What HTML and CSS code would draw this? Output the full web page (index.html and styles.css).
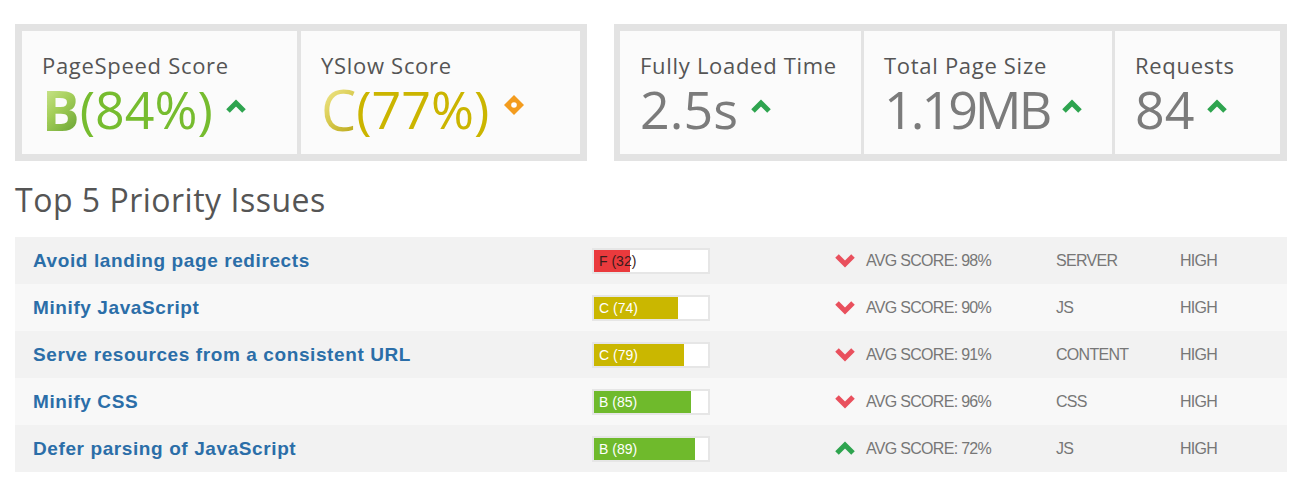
FILE: index.html
```html
<!DOCTYPE html>
<html>
<head>
<meta charset="utf-8">
<link rel="stylesheet" href="styles.css">
</head>
<body>
<div class="summary">
  <div class="box box-left">
    <div class="cell cell-ps">
      <div class="label">PageSpeed Score</div>
      <div class="value grade-b"><span class="letter letter-b">B</span><span class="pct">(84%)</span>
        <svg class="ico-up" viewBox="0 0 22 14" width="22" height="14"><polyline points="3,12 11,4 19,12" fill="none" stroke="#2ea44f" stroke-width="5"/></svg>
      </div>
    </div>
    <div class="cell cell-ys">
      <div class="label">YSlow Score</div>
      <div class="value grade-c"><span class="letter letter-c">C</span><span class="pct">(77%)</span>
        <svg class="ico-diamond" viewBox="0 0 22 22" width="22" height="22"><polygon points="11,1 21,11 11,21 1,11" fill="#f39c1e"/><circle cx="11" cy="11" r="2.8" fill="#fff"/></svg>
      </div>
    </div>
  </div>
  <div class="box box-right">
    <div class="cell cell-time">
      <div class="label">Fully Loaded Time</div>
      <div class="value metric">2.5s
        <svg class="ico-up" viewBox="0 0 22 14" width="22" height="14"><polyline points="3,12 11,4 19,12" fill="none" stroke="#2ea44f" stroke-width="5"/></svg>
      </div>
    </div>
    <div class="cell cell-size">
      <div class="label">Total Page Size</div>
      <div class="value metric"><span class="tight">1.19MB</span>
        <svg class="ico-up" viewBox="0 0 22 14" width="22" height="14"><polyline points="3,12 11,4 19,12" fill="none" stroke="#2ea44f" stroke-width="5"/></svg>
      </div>
    </div>
    <div class="cell cell-req">
      <div class="label">Requests</div>
      <div class="value metric">84
        <svg class="ico-up" viewBox="0 0 22 14" width="22" height="14"><polyline points="3,12 11,4 19,12" fill="none" stroke="#2ea44f" stroke-width="5"/></svg>
      </div>
    </div>
  </div>
</div>

<h2 class="heading">Top 5 Priority Issues</h2>

<div class="issues">
  <div class="row dark">
    <a class="name">Avoid landing page redirects</a>
    <div class="bar-cell"><div class="bar"><div class="fill fill-f" style="width:32%"></div><span class="bar-text dark-text">F (32)</span></div></div>
    <div class="avg"><svg class="ico-down" viewBox="0 0 22 15" width="22" height="15"><polyline points="3,3 11,11 19,3" fill="none" stroke="#e9505d" stroke-width="5"/></svg>AVG SCORE: 98%</div>
    <div class="type">SERVER</div>
    <div class="prio">HIGH</div>
  </div>
  <div class="row light">
    <a class="name">Minify JavaScript</a>
    <div class="bar-cell"><div class="bar"><div class="fill fill-c" style="width:74%"></div><span class="bar-text">C (74)</span></div></div>
    <div class="avg"><svg class="ico-down" viewBox="0 0 22 15" width="22" height="15"><polyline points="3,3 11,11 19,3" fill="none" stroke="#e9505d" stroke-width="5"/></svg>AVG SCORE: 90%</div>
    <div class="type">JS</div>
    <div class="prio">HIGH</div>
  </div>
  <div class="row dark">
    <a class="name">Serve resources from a consistent URL</a>
    <div class="bar-cell"><div class="bar"><div class="fill fill-c" style="width:79%"></div><span class="bar-text">C (79)</span></div></div>
    <div class="avg"><svg class="ico-down" viewBox="0 0 22 15" width="22" height="15"><polyline points="3,3 11,11 19,3" fill="none" stroke="#e9505d" stroke-width="5"/></svg>AVG SCORE: 91%</div>
    <div class="type">CONTENT</div>
    <div class="prio">HIGH</div>
  </div>
  <div class="row light">
    <a class="name">Minify CSS</a>
    <div class="bar-cell"><div class="bar"><div class="fill fill-b" style="width:85%"></div><span class="bar-text">B (85)</span></div></div>
    <div class="avg"><svg class="ico-down" viewBox="0 0 22 15" width="22" height="15"><polyline points="3,3 11,11 19,3" fill="none" stroke="#e9505d" stroke-width="5"/></svg>AVG SCORE: 96%</div>
    <div class="type">CSS</div>
    <div class="prio">HIGH</div>
  </div>
  <div class="row dark">
    <a class="name">Defer parsing of JavaScript</a>
    <div class="bar-cell"><div class="bar"><div class="fill fill-b" style="width:89%"></div><span class="bar-text">B (89)</span></div></div>
    <div class="avg"><svg class="ico-down" viewBox="0 0 22 15" width="22" height="15"><polyline points="3,12 11,4 19,12" fill="none" stroke="#2ea44f" stroke-width="5"/></svg>AVG SCORE: 72%</div>
    <div class="type">JS</div>
    <div class="prio">HIGH</div>
  </div>
</div>
</body>
</html>
```
FILE: styles.css
```css
* { box-sizing: border-box; }
html, body { margin: 0; padding: 0; background: #fff; }
body {
  padding: 24px 25px 0 15px;
  font-family: "Open Sans", "DejaVu Sans", sans-serif;
  color: #555;
}
.summary {
  display: flex;
  gap: 27px;
}
.box {
  display: flex;
  border: 7px solid #e3e3e3;
  background: #e3e3e3;
  height: 137px;
}
.box-left { width: 572px; gap: 4px; }
.box-right { width: 673px; gap: 3px; border-left-width: 6px; }
.cell {
  background: #fbfbfb;
  padding: 21px 0 0 20px;
}
.cell-ps { width: 275px; }
.cell-ys { flex: 1; }
.cell-time { width: 241px; }
.cell-size { width: 248px; }
.cell-req { flex: 1; }
.label {
  font-size: 22px;
  line-height: 26px;
  letter-spacing: 0.7px;
  color: #555;
  white-space: nowrap;
}
.value {
  display: flex;
  align-items: center;
  font-size: 52px;
  line-height: 54px;
  margin-top: 4px;
  white-space: nowrap;
}
.metric { color: #7b7b7b; }
.tight { letter-spacing: -3px; }
.letter {
  background-clip: text;
  -webkit-background-clip: text;
  color: transparent;
  font-size: 56px;
}
.letter-b {
  font-weight: 700;
  background-image: linear-gradient(135deg, #d6ea9c 0%, #a5cf5a 45%, #5f9d2d 100%);
}
.letter-c {
  background-image: linear-gradient(135deg, #f6ee9e 0%, #ddd05a 45%, #b8a514 100%);
}
.grade-b .pct { color: #76bc2f; }
.grade-c .pct { color: #cbb500; }
.ico-up { margin-left: 12px; margin-top: -6px; }
.ico-diamond { margin-left: 14px; margin-top: -8px; }
.heading {
  margin: 19px 0 0 0;
  font-size: 32px;
  line-height: 40px;
  font-weight: 400;
  letter-spacing: 0.5px;
  color: #555;
}
.issues {
  margin-top: 17px;
  width: 1272px;
}
.row {
  display: grid;
  grid-template-columns: 559px 242px 222px 124px 1fr;
  align-items: center;
  height: 47px;
  padding-left: 18px;
  font-family: "Liberation Sans", Arial, sans-serif;
}
.row.dark { background: #f2f2f2; }
.row.light { background: #f8f8f8; }
.name {
  font-size: 19px;
  font-weight: 700;
  letter-spacing: 0.6px;
  color: #2b6ea8;
  text-decoration: none;
}
.bar {
  position: relative;
  width: 118px;
  height: 26px;
  border: 2px solid #e6e6e6;
  background: #fff;
}
.fill { height: 100%; }
.fill-f { background: #ea3a3d; }
.fill-c { background: #cab700; }
.fill-b { background: #6fba2c; }
.bar-text {
  position: absolute;
  left: 5px;
  top: 0;
  line-height: 22px;
  font-size: 14px;
  color: #fff;
}
.bar-text.dark-text { color: #3a1c1c; }
.avg, .type, .prio {
  font-size: 16px;
  color: #777;
  letter-spacing: -0.7px;
}
.avg {
  display: flex;
  align-items: center;
  gap: 10px;
}
```
